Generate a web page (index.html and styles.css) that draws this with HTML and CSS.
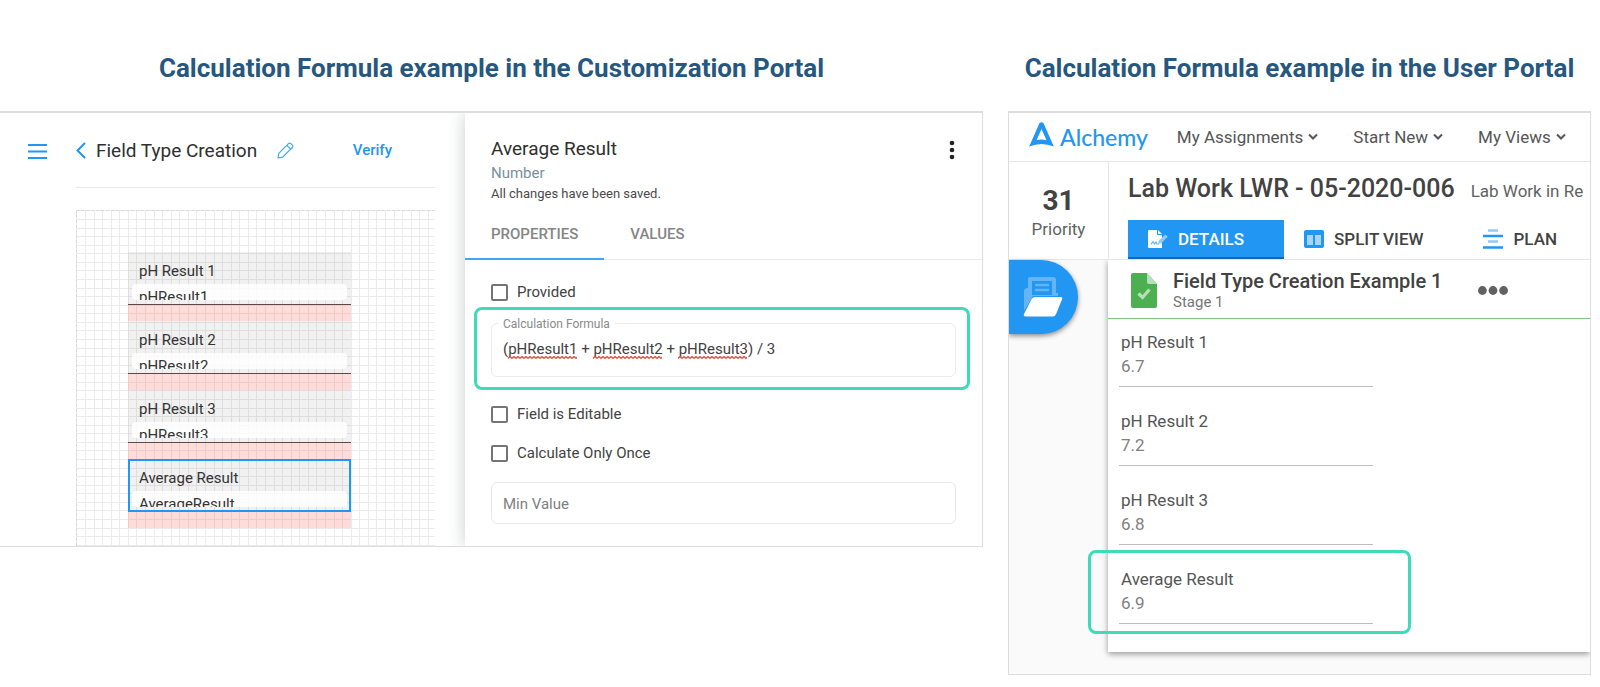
FILE: index.html
```
<!DOCTYPE html>
<html lang="en">
<head>
    <meta charset="UTF-8">
    <meta name="viewport" content="width=device-width, initial-scale=1.0">
    <title>Calculation Formula example</title>
    <link rel="stylesheet" href="styles.css">
</head>
<body>

    <div class="page">

        <!-- Customization Portal -->
        <section class="example">
            <h2 class="example-title">Calculation Formula example in the Customization Portal</h2>

            <div class="frame builder">
                <div class="designer">
                    <button class="icon-btn menu-btn" aria-label="Menu">
                        <svg width="19" height="17" viewBox="0 0 19 17"><path d="M0 2h19M0 8.500h19M0 15h19" stroke="#2196f3" stroke-width="2.200"/></svg>
                    </button>
                    <div class="designer-main">
                        <div class="toolbar">
                            <button class="icon-btn" aria-label="Back">
                                <svg width="10" height="17" viewBox="0 0 10 17"><path d="M9 1 1.500 8.500 9 16" fill="none" stroke="#2196f3" stroke-width="2"/></svg>
                            </button>
                            <h3 class="toolbar-title">Field Type Creation</h3>
                            <button class="icon-btn edit-btn" aria-label="Edit name">
                                <svg width="17" height="17" viewBox="0 0 17 17" fill="none" stroke="#42a5f5" stroke-width="1.200" stroke-linejoin="round"><path d="M1 16l.8-4.600L11.500 1.700q1.200-1.200 2.400 0l1.400 1.400q1.200 1.200 0 2.400L5.600 15.200zM9.800 3.400 13.600 7.200"/></svg>
                            </button>
                            <button class="verify-btn">Verify</button>
                        </div>
                        <div class="grid">
                            <div class="block">
                                <div class="block-card">
                                    <div class="block-name">pH Result 1</div>
                                    <div class="block-key">pHResult1</div>
                                </div>
                            </div>
                            <div class="block">
                                <div class="block-card">
                                    <div class="block-name">pH Result 2</div>
                                    <div class="block-key">pHResult2</div>
                                </div>
                            </div>
                            <div class="block">
                                <div class="block-card">
                                    <div class="block-name">pH Result 3</div>
                                    <div class="block-key">pHResult3</div>
                                </div>
                            </div>
                            <div class="block">
                                <div class="block-card selected">
                                    <div class="block-name">Average Result</div>
                                    <div class="block-key">AverageResult</div>
                                </div>
                            </div>
                        </div>
                    </div>
                </div>

                <div class="props">
                    <div class="props-head">
                        <div>
                            <h3 class="props-title">Average Result</h3>
                            <div class="props-type">Number</div>
                            <div class="props-status">All changes have been saved.</div>
                        </div>
                        <button class="icon-btn more-btn" aria-label="More">
                            <svg width="6" height="20" viewBox="0 0 6 20" fill="#212121"><circle cx="3" cy="3" r="2.300"/><circle cx="3" cy="10" r="2.300"/><circle cx="3" cy="17" r="2.300"/></svg>
                        </button>
                    </div>
                    <div class="props-tabs">
                        <button class="props-tab active">PROPERTIES</button>
                        <button class="props-tab">VALUES</button>
                    </div>
                    <div class="props-form">
                        <label class="check"><input type="checkbox"> Provided</label>
                        <div class="highlight">
                            <div class="field">
                                <label class="field-label" for="formula">Calculation Formula</label>
                                <textarea class="field-input" id="formula" rows="1" spellcheck="false">(pHResult1 + pHResult2 + pHResult3) / 3</textarea>
                                <div class="squiggles"><i></i><i></i><i></i></div>
                            </div>
                        </div>
                        <label class="check editable"><input type="checkbox"> Field is Editable</label>
                        <label class="check once"><input type="checkbox"> Calculate Only Once</label>
                        <input class="min-value" type="text" placeholder="Min Value" aria-label="Min Value">
                    </div>
                </div>
            </div>
        </section>

        <!-- User Portal -->
        <section class="example">
            <h2 class="example-title">Calculation Formula example in the User Portal</h2>

            <div class="frame portal">
                <header class="topbar">
                    <a class="logo" href="#">
                        <svg width="25" height="25" viewBox="0 0 25 25"><path fill="#2196f3" fill-rule="evenodd" d="M10.400 1.300Q12.500-1 14.600 1.300L24.800 24.600Q12.500 19.600.2 24.600zM12.500 7 7.500 18.300q5-1.500 10 0z"/></svg>
                        Alchemy
                    </a>
                    <nav class="nav">
                        <a class="nav-link" href="#">My Assignments <svg width="10" height="8" viewBox="0 0 10 8"><path d="M1 1.500 5 5.500 9 1.500"/></svg></a>
                        <a class="nav-link" href="#">Start New <svg width="10" height="8" viewBox="0 0 10 8"><path d="M1 1.500 5 5.500 9 1.500"/></svg></a>
                        <a class="nav-link" href="#">My Views <svg width="10" height="8" viewBox="0 0 10 8"><path d="M1 1.500 5 5.500 9 1.500"/></svg></a>
                    </nav>
                </header>

                <div class="record">
                    <div class="priority">
                        <div class="priority-value">31</div>
                        <div class="priority-label">Priority</div>
                    </div>
                    <div class="record-main">
                        <div class="record-head">
                            <h3 class="record-title">Lab Work LWR - 05-2020-006</h3>
                            <span class="record-status">Lab Work in Re</span>
                        </div>
                        <div class="record-tabs">
                            <button class="record-tab active">
                                <svg width="20" height="20" viewBox="0 0 20 20"><path fill="#fff" d="M1 1h8v5h5v13H1q-1 0-1-1V2q0-1 1-1z"/><path fill="#fff" d="M10 1l4 4h-4z"/><path d="M3 15.500l2-3 1.500 2.500L8 13l1 2h2" fill="none" stroke="#64b5f6" stroke-width="1.200"/><path d="M10 15l.7-3.200L17.300 5.400l2.500 2.400-6.600 6.500z" fill="#90caf9"/></svg>
                                DETAILS
                            </button>
                            <button class="record-tab">
                                <svg width="20" height="18" viewBox="0 0 20 18"><rect width="20" height="18" rx="2" fill="#2196f3"/><path fill="#a6d4fa" d="M3 5h6v10H3zM11 5h6v10h-6z"/></svg>
                                SPLIT VIEW
                            </button>
                            <button class="record-tab">
                                <svg width="20" height="20" viewBox="0 0 20 20"><path d="M5 1.500h10M5 12.500h10" stroke="#90caf9" stroke-width="2.400"/><path d="M0 7h20M0 18.500h20" stroke="#2196f3" stroke-width="2.400"/></svg>
                                PLAN
                            </button>
                        </div>
                    </div>
                </div>

                <div class="portal-body">
                    <div class="rail">
                        <button class="drawer-btn" aria-label="Open files">
                            <svg width="40" height="40" viewBox="0 0 40 40"><path fill="#64b5f6" d="M5 2q0-2 2-2h23q3 0 3 3v13h2v3H10L1 34V14q0-3 4-3z"/><path fill="#2196f3" d="M9 4h20v14H9z"/><path d="M12 8h14M12 13h14" stroke="#64b5f6" stroke-width="2.600"/><path fill="#fff" d="M13 20h24.500q2.500 0 1.600 2.300l-6 14.700q-1 2.500-3.300 2.500H3Q0 39.500 1 37L8.600 22q1-2 4.400-2z"/></svg>
                        </button>
                    </div>
                    <div class="sheet">
                        <div class="sheet-head">
                            <svg width="26" height="35" viewBox="0 0 26 35"><path fill="#4caf50" d="M2 0h14l10 11v22q0 2-2 2H2q-2 0-2-2V2q0-2 2-2z"/><path fill="#b7dfb9" d="M16 0l10 11H18q-2 0-2-2z"/><path d="M7.500 20.500l4 4 7-8" fill="none" stroke="#b7dfb9" stroke-width="3.200"/></svg>
                            <div>
                                <h4 class="sheet-title">Field Type Creation Example 1</h4>
                                <div class="sheet-stage">Stage 1</div>
                            </div>
                            <button class="icon-btn sheet-more" aria-label="More">
                                <svg width="30" height="9" viewBox="0 0 30 9" fill="#616161"><circle cx="4.400" cy="4.500" r="4.400"/><circle cx="15" cy="4.500" r="4.400"/><circle cx="25.600" cy="4.500" r="4.400"/></svg>
                            </button>
                        </div>
                        <div class="results">
                            <div class="result">
                                <label for="ph1">pH Result 1</label>
                                <input id="ph1" type="text" value="6.7">
                            </div>
                            <div class="result">
                                <label for="ph2">pH Result 2</label>
                                <input id="ph2" type="text" value="7.2">
                            </div>
                            <div class="result">
                                <label for="ph3">pH Result 3</label>
                                <input id="ph3" type="text" value="6.8">
                            </div>
                            <div class="result marked">
                                <label for="average">Average Result</label>
                                <input id="average" type="text" value="6.9">
                            </div>
                        </div>
                    </div>
                </div>
            </div>
        </section>

    </div>

</body>
</html>
```
FILE: styles.css
```
* {
    margin: 0;
    padding: 0;
    box-sizing: border-box;
}

body {
    background: #fff;
    color: #424242;
    font-family: Roboto, "Liberation Sans", sans-serif;
    font-size: 15px;
}

button, input, textarea {
    font-family: inherit;
    border: none;
    background: none;
    outline: none;
}

button {
    cursor: pointer;
}

svg {
    display: block;
    flex-shrink: 0;
}

/* Two examples side by side */
.page {
    display: grid;
    grid-template-columns: 983fr 583fr;
    align-items: start;
    gap: 25px;
    padding: 53px 9px 12px 0;
}

.example {
    min-width: 0;
}

.example-title {
    margin-bottom: 28px;
    color: #26587f;
    font-size: 26px;
    font-weight: bold;
    line-height: 30px;
    text-align: center;
    white-space: nowrap;
}

.frame {
    border: 1px solid #dcdede;
    border-top-width: 2px;
    overflow: hidden;
}

.icon-btn {
    display: flex;
    align-items: center;
}

/* Form designer */
.builder {
    display: grid;
    grid-template-columns: 465fr 517fr;
    border-left: none;
}

.designer {
    display: flex;
    align-items: flex-start;
    padding: 0 30px 0 28px;
}

.menu-btn {
    height: 76px;
    margin-right: 29px;
}

.designer-main {
    flex: 1;
}

.toolbar {
    display: flex;
    align-items: center;
    height: 75px;
    padding-right: 43px;
    border-bottom: 1px solid #e8e8e8;
}

.toolbar-title {
    margin-left: 10px;
    color: #2f2f2f;
    font-size: 19px;
    font-weight: normal;
}

.edit-btn {
    margin-left: 20px;
}

.verify-btn {
    margin-left: auto;
    color: #2196f3;
    font-size: 15px;
    font-weight: 500;
}

.grid {
    margin-top: 22px;
    padding: 41px 84px 18px 51px;
    border: 1px dashed #d8d8d8;
    border-width: 1px 0 0 1px;
    background: url("data:image/svg+xml,%3Csvg xmlns='http://www.w3.org/2000/svg' width='60' height='60'%3E%3Cpath d='M8.500 0v60M17.500 0v60M25.500 0v60M34.500 0v60M42.500 0v60M51.500 0v60M59.500 0v60M0 8.500h60M0 17.500h60M0 25.500h60M0 34.500h60M0 42.500h60M0 51.500h60M0 59.500h60' stroke='%23ebebeb'/%3E%3C/svg%3E");
}

.block {
    padding-bottom: 16px;
    background: linear-gradient(rgba(244, 67, 54, 0.19), rgba(244, 67, 54, 0.19)) bottom / 100% 16px no-repeat;
}

.block-card {
    height: 53px;
    padding: 7px 4px 0;
    border-bottom: 1px solid #5c4848;
    background: rgba(0, 0, 0, 0.055);
}

.block-card.selected {
    padding: 5px 2px 0;
    border: 2px solid #2196f3;
}

.block-name {
    padding-left: 7px;
    color: #333;
    font-size: 15px;
    line-height: 24px;
}

.block-key {
    height: 16px;
    margin-top: 1px;
    padding: 4px 7px 0;
    border-radius: 4px;
    background: rgba(255, 255, 255, 0.85);
    color: #333;
    font-size: 15px;
    line-height: 18px;
    overflow: hidden;
}

/* Field properties */
.props {
    box-shadow: 0 0 16px rgba(38, 50, 56, 0.25);
}

.props-head {
    display: flex;
    justify-content: space-between;
    align-items: flex-start;
    padding: 24px 27px 0 26px;
}

.props-title {
    color: #2f2f2f;
    font-size: 19px;
    font-weight: normal;
    line-height: 24px;
}

.props-type {
    margin-top: 2px;
    color: #78909c;
    font-size: 15px;
    line-height: 20px;
}

.props-status {
    margin-top: 1px;
    color: #4a4a4a;
    font-size: 13px;
    line-height: 20px;
}

.more-btn {
    margin-top: 3px;
}

.props-tabs {
    display: flex;
    height: 50px;
    margin-top: 6px;
    border-bottom: 1px solid #e8e8e8;
}

.props-tab {
    height: 50px;
    padding: 0 26px 2px;
    color: #858585;
    font-size: 15px;
    font-weight: 500;
}

.props-tab.active {
    padding-bottom: 0;
    border-bottom: 2px solid #42a5f5;
}

.props-form {
    padding: 20px 26px 22px;
}

.check {
    display: flex;
    align-items: center;
    gap: 9px;
    font-size: 15px;
    line-height: 24px;
}

.check input {
    appearance: none;
    width: 17px;
    height: 17px;
    border: 2px solid #757575;
    border-radius: 2px;
}

.editable {
    margin-top: 12px;
}

.once {
    margin-top: 15px;
}

.highlight {
    margin: 3px -14px 0 -17px;
    padding: 13px 11px 10px 14px;
    border: 3px solid #3ddbb9;
    border-radius: 8px;
}

.field {
    position: relative;
    height: 54px;
    padding: 13px 11px 0;
    border: 1px solid #ececec;
    border-radius: 6px;
}

.field-label {
    position: absolute;
    top: -7px;
    left: 6px;
    padding: 0 5px;
    background: #fff;
    color: #8a8a8a;
    font-size: 12px;
    line-height: 14px;
}

.field-input {
    display: block;
    width: 100%;
    color: #424242;
    font-size: 15px;
    line-height: 24px;
    resize: none;
}

/* Spelling marks under the unknown words */
.squiggles {
    position: absolute;
    top: 32px;
    left: 16px;
    display: flex;
    gap: 16px;
    pointer-events: none;
}

.squiggles i {
    width: 69px;
    height: 3px;
    background: url("data:image/svg+xml,%3Csvg xmlns='http://www.w3.org/2000/svg' width='4' height='3'%3E%3Cpath d='M0 2.500 2 .5 4 2.500' fill='none' stroke='%23f44336' stroke-width='1.300'/%3E%3C/svg%3E");
}

.min-value {
    display: block;
    width: 100%;
    height: 42px;
    margin-top: 17px;
    padding: 2px 11px 0;
    border: 1px solid #e8e8e8;
    border-radius: 6px;
    font-size: 15px;
}

.min-value::placeholder {
    color: #808080;
}

/* User portal header */
.topbar {
    display: flex;
    align-items: center;
    height: 49px;
    padding-left: 20px;
    border-bottom: 1px solid #e6e6e6;
}

.logo {
    display: flex;
    align-items: center;
    gap: 6px;
    color: #2196f3;
    font-family: Lato, sans-serif;
    font-size: 23px;
    font-weight: 500;
    line-height: 26px;
    text-decoration: none;
}

.logo svg {
    margin-bottom: 6px;
}

.nav {
    display: flex;
    gap: 35px;
    margin-left: 29px;
}

.nav-link {
    display: flex;
    align-items: center;
    gap: 5px;
    color: #555;
    font-size: 17px;
    text-decoration: none;
    white-space: nowrap;
}

.nav-link path {
    fill: none;
    stroke: #555;
    stroke-width: 2;
}

/* Record summary */
.record {
    display: flex;
    border-bottom: 1px solid #e6e6e6;
}

.priority {
    flex: 0 0 100px;
    padding-top: 23px;
    border-right: 1px solid #e6e6e6;
    text-align: center;
}

.priority-value {
    font-size: 28px;
    font-weight: bold;
    line-height: 32px;
}

.priority-label {
    color: #616161;
    font-size: 17px;
    line-height: 24px;
}

.record-main {
    flex: 1;
    min-width: 0;
    padding: 13px 0 0 19px;
    overflow: hidden;
}

.record-head {
    display: flex;
    align-items: baseline;
    gap: 16px;
    white-space: nowrap;
}

.record-title {
    font-size: 25px;
    font-weight: 500;
    line-height: 28px;
}

.record-status {
    color: #616161;
    font-size: 17px;
}

.record-tabs {
    display: flex;
    margin-top: 17px;
}

.record-tab {
    display: flex;
    flex-shrink: 0;
    align-items: center;
    gap: 10px;
    height: 39px;
    padding: 0 40px 2px 20px;
    color: #424242;
    font-size: 17px;
    font-weight: 500;
    white-space: nowrap;
}

.record-tab.active {
    padding-bottom: 0;
    border-bottom: 2px solid #1565c0;
    background: #2196f3;
    color: #fff;
}

/* Record content */
.portal-body {
    display: flex;
    padding-bottom: 22px;
    background: #fafafa;
}

.rail {
    flex: 0 0 99px;
}

.drawer-btn {
    display: flex;
    align-items: center;
    width: 69px;
    height: 74px;
    padding-left: 14px;
    border-radius: 0 37px 37px 0;
    background: #2196f3;
    box-shadow: 0 2px 5px rgba(0, 0, 0, 0.45);
}

.sheet {
    flex: 1;
    background: #fff;
    box-shadow: 0 2px 6px rgba(0, 0, 0, 0.4);
    clip-path: inset(0 0 -20px -35px);
}

.sheet-head {
    display: flex;
    align-items: center;
    gap: 16px;
    height: 59px;
    padding: 2px 0 0 23px;
    border-bottom: 1px solid #81c784;
}

.sheet-title {
    font-size: 20px;
    font-weight: 500;
    line-height: 24px;
    white-space: nowrap;
}

.sheet-stage {
    color: #757575;
    font-size: 15px;
    line-height: 18px;
}

.sheet-more {
    margin-left: 20px;
}

.results {
    display: grid;
    gap: 22px;
    padding: 11px 11px 28px;
}

.result {
    position: relative;
    width: 100%;
    max-width: 254px;
    padding-bottom: 8px;
    border-bottom: 1px solid #bdbdbd;
    font-size: 17px;
}

.result label,
.result input {
    display: block;
    width: 100%;
    height: 24px;
    padding-left: 2px;
    color: #555;
    font-size: 17px;
    line-height: 24px;
}

.result input {
    color: #808080;
}

.result.marked::after {
    content: "";
    position: absolute;
    top: -17px;
    right: -38px;
    bottom: -11px;
    left: -31px;
    border: 3px solid #3ddbb9;
    border-radius: 8px;
    pointer-events: none;
}
```
